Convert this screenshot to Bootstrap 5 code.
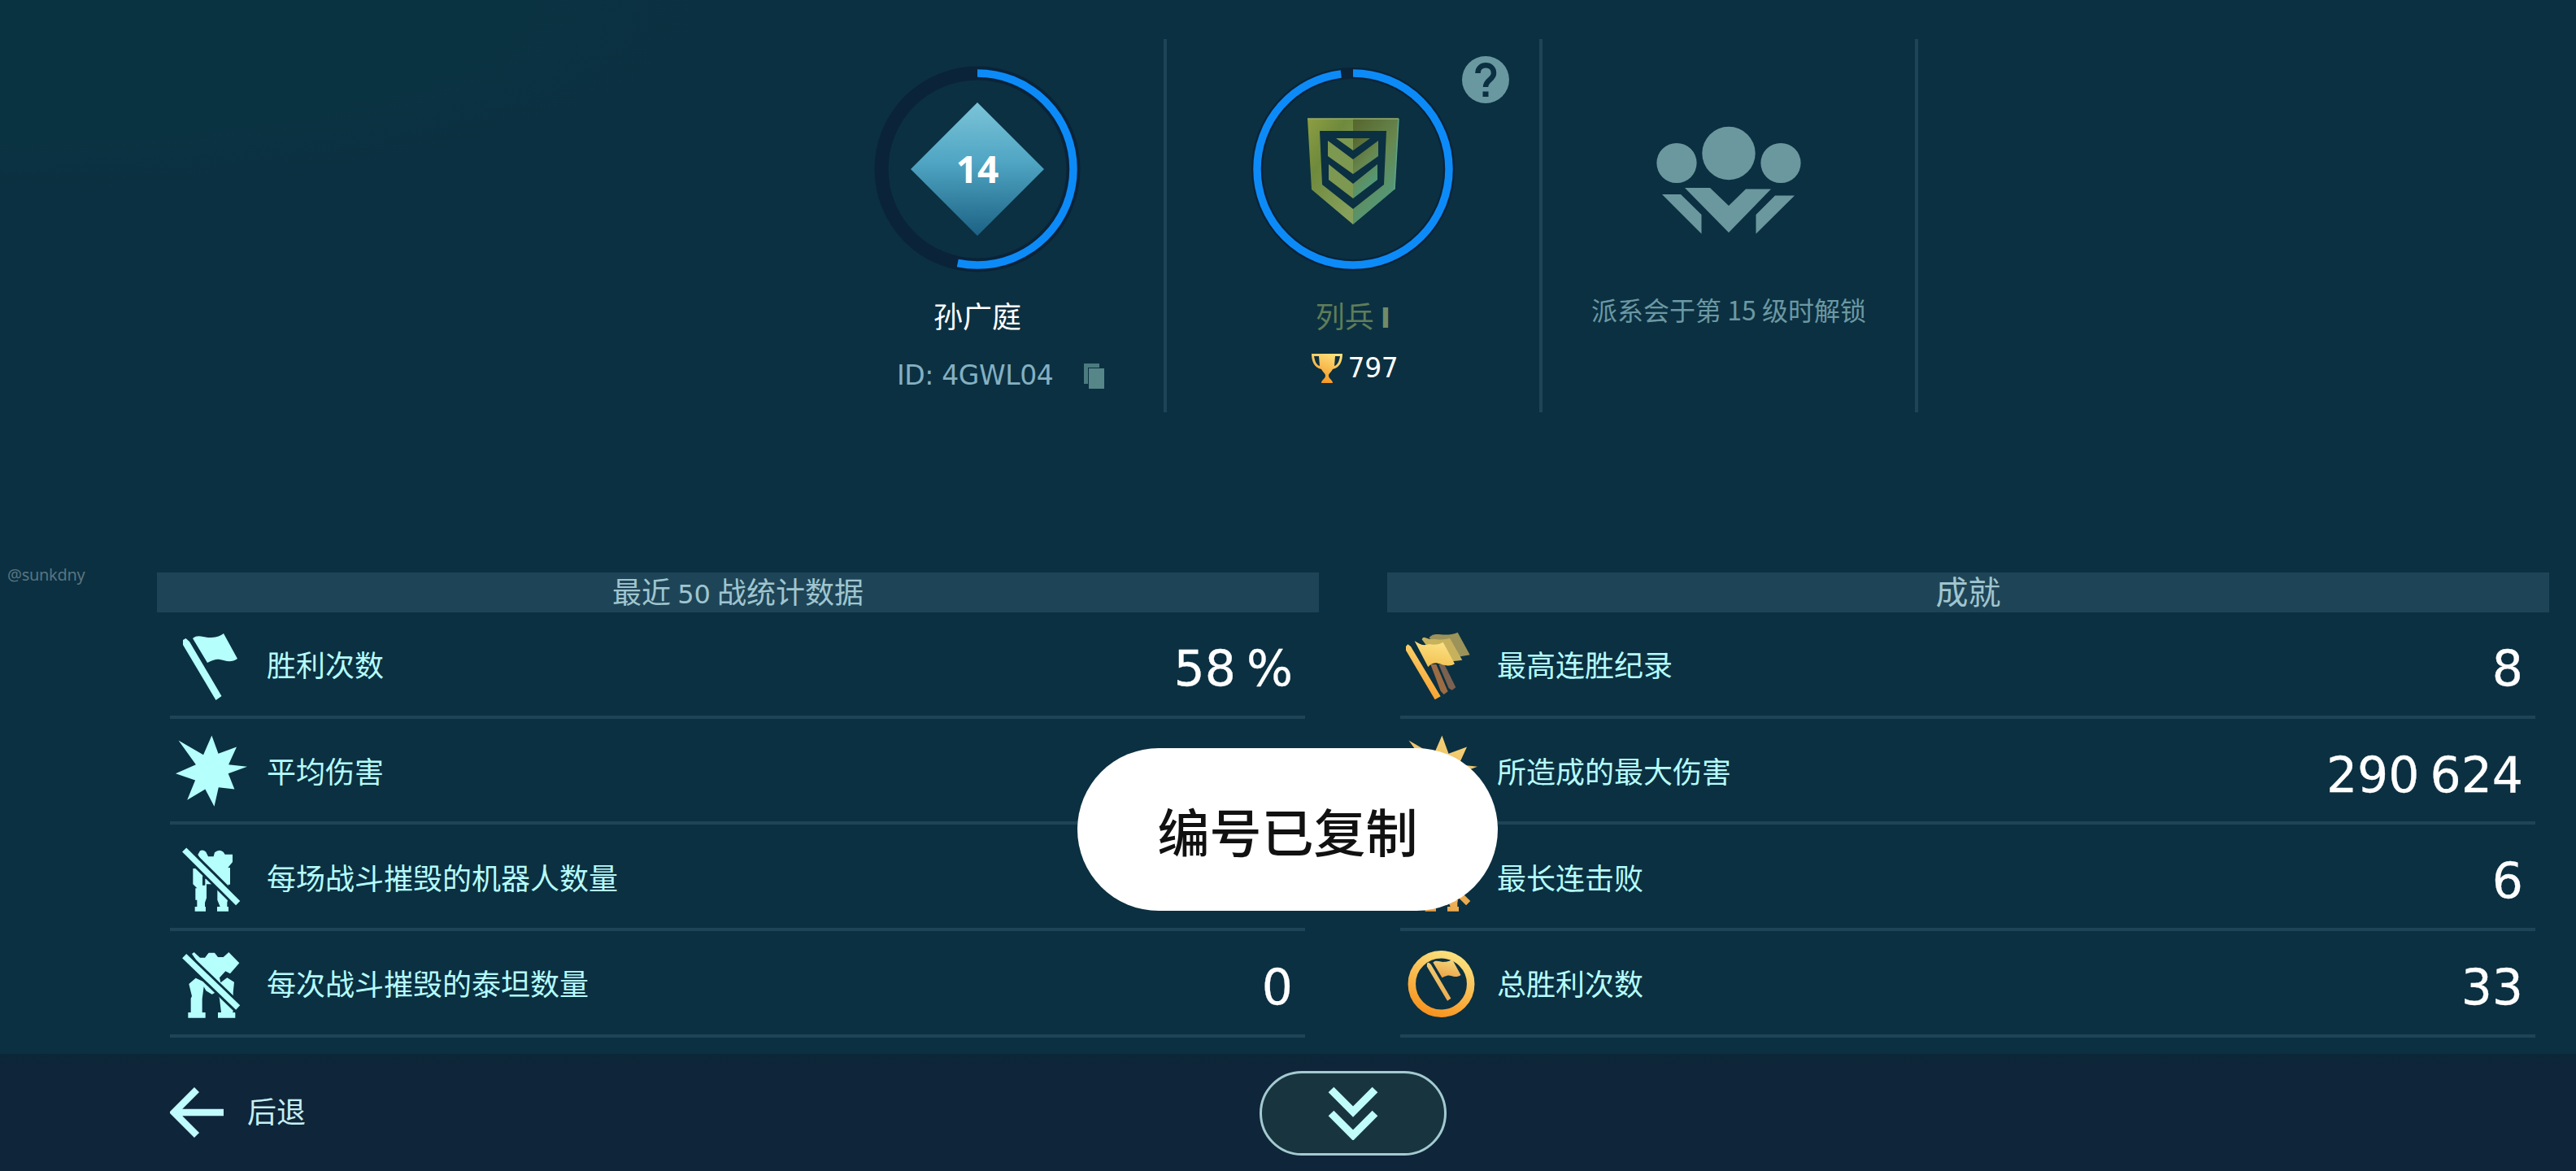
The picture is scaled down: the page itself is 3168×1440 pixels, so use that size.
<!DOCTYPE html>
<html lang="zh-CN">
<head>
  <meta charset="UTF-8" />
  <meta name="viewport" content="width=device-width, initial-scale=1.0" />
  <title>战绩</title>
  <link href="https://cdn.jsdelivr.net/npm/bootstrap@5.3.0/dist/css/bootstrap.min.css" rel="stylesheet" />
  <style>
    body { font-family: "Noto Sans CJK SC", sans-serif; background: #0b3041; color: #b5fbfb; height: 1440px; overflow: hidden; font-size: 36px; line-height: 50px; }
    svg { display: block; flex: none; }
    .digits { font-family: "DejaVu Sans", sans-serif; }

    .profile { height: 704px; padding: 48px 0 0 973px; background: radial-gradient(ellipse 900px 240px at 0 0, #0a3342 70%, #0b3041 100%); }
    .profile-cell { width: 462px; height: 459px; border-right: 4px solid #1e4557; padding-top: 30px; }
    .ring-box { width: 260px; height: 260px; }
    .level-num { font-family: "Open Sans", sans-serif; font-weight: 700; font-size: 46px; fill: #fff; }
    .player-name { margin-top: 24px; color: #fff; }
    .player-id { margin-top: 25px; padding-left: 130px; gap: 38px; color: #84b0c2; }
    .player-id .digits { font-size: 33px; letter-spacing: -0.4px; }
    .rank-name { margin-top: 24px; color: #5f7d59; }
    .rank-name .digits { font-size: 33px; font-weight: 700; color: #718c66; margin-left: 8px; }
    .trophies { margin-top: 11px; gap: 6px; padding-left: 5px; color: #fff; }
    .trophies .digits { font-size: 33px; letter-spacing: -0.3px; }
    .help-btn { right: 36px; top: 20px; }
    .locked { margin-top: 17px; font-size: 32px; color: #6b99a3; }
    .sign { left: 9px; top: 692px; font-family: "Noto Sans", sans-serif; font-size: 20px; line-height: 30px; color: #587580; letter-spacing: -0.3px; }

    .boards { height: 592px; padding-left: 193px; gap: 84px; }
    .board { width: 1429px; }
    .board-head { height: 49px; line-height: 45px; background: #1e4557; color: #a0c5cf; }
    .board-head .digits { font-size: 32px; }
    .head-big { font-size: 40px; }
    .stat-row { height: 130.7px; margin: 0 17px 0 16px; border-bottom: 4px solid #1e4557; padding: 0 15px 0 5px; }
    .stat-row .stat-icon { width: 90px; height: 90px; margin-right: 24px; margin-top: 4px; }
    .stat-label { margin-top: 0; }
    .stat-value { font-size: 60px; line-height: 80px; color: #fff; margin-top: 11px; word-spacing: -6px; -webkit-text-stroke: 0.3px #fff; }
    .icon-ice { fill: #b5fffc; color: #b5fffc; }
    .icon-gold { fill: url(#goldSoft); color: #ebab50; }
    .cut { fill: none; stroke: #0b3041; stroke-width: 40; }
    .bar { fill: none; stroke: currentColor; stroke-width: 22; }

    .bottom-bar { height: 144px; background: linear-gradient(#0b2738, #0f2539 14px); padding-left: 209px; }
    .back-btn { gap: 29px; color: #c5eef2; width: 1340px; }
    .back-btn span { margin-top: -6px; }
    .more-btn { width: 230px; height: 104px; border: 3px solid #a3cad0; border-radius: 52px; background: #18353f; margin-top: 1px; }

    .copied-toast { left: 1325px; top: 920px; width: 517px; height: 200px; border-radius: 100px; background: #fff; color: #111; font-size: 64px; font-weight: 500; line-height: 90px; }
  </style>
</head>
<body>
  <!-- Icon symbols -->
  <svg width="0" height="0" class="position-absolute">
    <defs>
      <linearGradient id="gold" x1="0.7" y1="0" x2="0.3" y2="1">
        <stop offset="0" stop-color="#fbe07c" />
        <stop offset="1" stop-color="#f7941f" />
      </linearGradient>
      <linearGradient id="goldSoft" x1="0.7" y1="0" x2="0.3" y2="1">
        <stop offset="0" stop-color="#f3d77c" />
        <stop offset="1" stop-color="#eba145" />
      </linearGradient>
      <linearGradient id="goldCloth" x1="0.6" y1="0" x2="0.3" y2="1">
        <stop offset="0" stop-color="#fbe285" />
        <stop offset="1" stop-color="#f2c04f" />
      </linearGradient>
      <linearGradient id="gem" x1="0" y1="0" x2="0" y2="1">
        <stop offset="0" stop-color="#7cc4d8" />
        <stop offset="0.45" stop-color="#4fa5c3" />
        <stop offset="1" stop-color="#1c6184" />
      </linearGradient>
      <linearGradient id="rankLeft" x1="0" y1="0" x2="0.7" y2="1">
        <stop offset="0" stop-color="#8d9e42" />
        <stop offset="0.4" stop-color="#6f8a3c" />
        <stop offset="1" stop-color="#86a05c" />
      </linearGradient>
      <linearGradient id="rankRight" x1="0" y1="0" x2="0.5" y2="1">
        <stop offset="0" stop-color="#56652c" />
        <stop offset="0.5" stop-color="#67874f" />
        <stop offset="1" stop-color="#4f9c80" />
      </linearGradient>
      <symbol id="flag" viewBox="0 0 90 90">
        <path d="M11 14 L14.500 12 L19 16 L58.500 83 L51.500 88 L11 20Z" />
        <path d="M23 12 C30 6 37 12 46 11 C53 10.500 57 9 61 6 L78 37 C70 43 62 39 56 38 C50 37 46 40 41 42Z" />
      </symbol>
      <symbol id="burst" viewBox="0 0 90 90">
        <path d="M46.400 .5 L54.500 22.800 77 14.500 67.100 36.200 90 38.800 66.700 47.200 74.400 66.500 54.800 64.200 49.500 87.800 38.400 66.500 16.200 79.800 26.100 55.500 2 47.200 26.900 36.200 5.500 6.500 36.100 24.200Z" />
      </symbol>
      <symbol id="robot" viewBox="0 0 270 270">
        <path fill-rule="evenodd" d="M88 48 L96 34 Q107 28 118 38 L126 55 H146 L150 40 Q166 26 182 38 L188 47 H216 V75 L199 96 H207 V158 H200 V208 L196 225 V240 H201 V257 H159 V240 H170 L160 215 V168 L150 157 H120 V208 L114 225 V240 H117 V257 H77 V240 H85 V215 H79 V172 H85 L70 157 V99 H93 L108 80Z M105 127 V161 H115 V137 H125 V127Z" />
        <path class="cut" d="M40 32 L250 240" />
        <path class="bar" d="M38 30 L236 227" />
      </symbol>
      <symbol id="titan" viewBox="0 0 270 270">
        <path d="M66 24 L74 18 L96 38 H114 L128 20 H150 L162 36 H182 L202 18 L241 58 L207 97 L190 88 L168 112 L172 130 L196 112 L222 128 L218 168 L220 232 L216 240 H226 V260 H162 V240 H174 L168 190 L160 163 L140 173 L118 160 L110 145 L104 190 V240 H116 V260 H52 V240 H62 V188 L66 180 L55 135 L80 113 L106 125 L125 110Z" />
        <path class="cut" d="M40 34 L250 236" />
        <path class="bar" d="M38 32 L236 222" />
      </symbol>
      <symbol id="streak" viewBox="0 0 270 270">
        <path fill="#7b6150" d="M127 132 H148 L190 217 L176 227 L164 220Z" />
        <path fill="#9c6c43" d="M97 132 H118 L161 232 L146 243 L134 230Z" />
        <path fill="#9b9359" d="M92 34 C112 6 146 36 197 14 L242 97 C214 102 180 110 160 105Z" />
        <path fill="#c7b15d" d="M65 40 C72 20 86 45 108 38 C134 42 150 40 168 35 L214 116 C180 122 150 118 128 125Z" />
        <path fill="url(#goldCloth)" d="M38 46 C56 56 66 66 92 57 C112 62 130 58 143 50 L186 130 C168 143 146 134 124 128 C108 124 96 132 88 142Z" />
        <path fill="url(#gold)" d="M6 66 L13 58 L24 66 L134 250 L113 262 L6 80Z" />
      </symbol>
      <symbol id="medal" viewBox="0 0 90 90">
        <circle cx="45.500" cy="45" r="36.200" fill="none" stroke="url(#gold)" stroke-width="9.500" />
        <svg x="21" y="11" width="56" height="56"><use href="#flag" /></svg>
      </symbol>
    </defs>
  </svg>

  <!-- Player profile -->
  <div class="profile d-flex">
    <div class="profile-cell">
      <svg class="ring-box mx-auto" viewBox="-130 -130 260 260">
        <circle r="118" fill="none" stroke="#0a2338" stroke-width="17" />
        <circle r="118" fill="none" stroke="#0c8bf8" stroke-width="9.500" pathLength="100" stroke-dasharray="53.3 100" transform="rotate(-90)" />
        <path d="M0 -82 L82 0 L0 82 L-82 0Z" fill="url(#gem)" />
        <text class="level-num" text-anchor="middle" y="17">14</text>
      </svg>
      <div class="player-name text-center">孙广庭</div>
      <div class="player-id d-flex align-items-center">
        <span class="digits">ID: 4GWL04</span>
        <svg width="25" height="31" viewBox="0 0 25 31">
          <path d="M0 0 H19 V5 H5 V25 H0Z" fill="#4b7b7f" />
          <path d="M6 6 H25 V31 H6Z" fill="#578688" />
        </svg>
      </div>
    </div>

    <div class="profile-cell position-relative">
      <svg class="ring-box mx-auto" viewBox="-130 -130 260 260">
        <circle r="118" fill="none" stroke="#0a2338" stroke-width="14" />
        <circle r="118" fill="none" stroke="#0c8bf8" stroke-width="9.500" pathLength="100" stroke-dasharray="98 100" transform="rotate(-90)" />
        <path d="M-56 -62 H0 V-47 H-41 L-38 19 L0 49 V68 L-51 25Z" fill="url(#rankLeft)" />
        <path d="M56 -62 H0 V-47 H41 L38 19 L0 49 V68 L51 25Z" fill="url(#rankRight)" />
        <path d="M-56 -62 H56" stroke="#98ad68" stroke-width="1.500" />
        <path d="M56 -62 L51 25" stroke="#5fa58a" stroke-width="1.500" />
        <path d="M-21 -38 H0 V-23Z M-31 -35 L0 -12 V6 L-31 -16Z M-30 -6 L0 18 V36 L-30 13Z" fill="#7d9850" />
        <path d="M21 -38 H0 V-23Z M31 -35 L0 -12 V6 L31 -16Z M30 -6 L0 18 V36 L30 13Z" fill="url(#rankRight)" />
      </svg>
      <button class="help-btn btn p-0 border-0 position-absolute">
        <svg width="60" height="60" viewBox="-30 -30 60 60">
          <circle r="29" fill="#6998a0" />
          <path d="M-9.500 -8 C-9.500 -21 10 -21 10 -8 C10 0 0 0 0 9" fill="none" stroke="#0b3041" stroke-width="6.500" />
          <path d="M-3.500 14.500 H3.500 V21 H-3.500Z" fill="#0b3041" />
        </svg>
      </button>
      <div class="rank-name text-center">列兵<span class="digits">I</span></div>
      <div class="trophies d-flex align-items-center justify-content-center">
        <svg width="38" height="37" viewBox="0 0 38 37" fill="url(#gold)">
          <path fill-rule="evenodd" d="M0 0 H38 C38 9 35 17 26 19 C24 23 21 24 21 27 C21 31 26 32 26 36 H12 C12 32 17 31 17 27 C17 24 14 23 12 19 C3 17 0 9 0 0Z M3 3 C4 9 6 14 10 15 L9 3Z M29 3 L28 15 C32 14 34 9 35 3Z" />
        </svg>
        <span class="digits">797</span>
      </div>
    </div>

    <div class="profile-cell">
      <svg class="ring-box mx-auto" viewBox="-130 -130 260 260" fill="#6b989e">
        <circle cx="0" cy="-19.500" r="32.700" />
        <circle cx="-64" cy="-7.500" r="24.600" />
        <circle cx="64" cy="-7.500" r="24.600" />
        <path d="M-54 23 H-23 L0 45 L21 24.500 H52 L0 78Z" />
        <path d="M-82 31 H-59 L-33.500 56 V79.500Z M81 32.500 H57 L33.500 56 V79.500Z" />
      </svg>
      <div class="locked text-center">派系会于第 15 级时解锁</div>
    </div>
  </div>
  <div class="sign position-absolute">@sunkdny</div>

  <!-- Statistics -->
  <div class="boards d-flex">
    <div class="board">
      <div class="board-head text-center">最近 <span class="digits">50</span> 战统计数据</div>
      <div id="recent-list"></div>
    </div>
    <div class="board">
      <div class="board-head head-big text-center">成就</div>
      <div id="achievement-list"></div>
    </div>
  </div>

  <!-- Bottom bar -->
  <div class="bottom-bar d-flex align-items-center">
    <div class="back-btn d-flex align-items-center">
      <svg width="66" height="62" viewBox="0 0 66 62">
        <path d="M33 3 L5 31 L33 59 M6 31 H66" fill="none" stroke="#c0fbfd" stroke-width="8.500" />
      </svg>
      <span>后退</span>
    </div>
    <button class="more-btn btn p-0 d-flex align-items-center justify-content-center">
      <svg width="62" height="66" viewBox="0 0 62 66">
        <path d="M4 4 L31 31 L58 4 M4 33 L31 60 L58 33" fill="none" stroke="#bffcfa" stroke-width="9.500" />
      </svg>
    </button>
  </div>

  <!-- Copy notice -->
  <div class="copied-toast position-absolute d-flex align-items-center justify-content-center">编号已复制</div>

  <script src="https://cdn.jsdelivr.net/npm/bootstrap@5.3.0/dist/js/bootstrap.bundle.min.js"></script>
  <script>
    const recent = [
      { icon: "flag", label: "胜利次数", value: "58 %" },
      { icon: "burst", label: "平均伤害", value: "" },
      { icon: "robot", label: "每场战斗摧毁的机器人数量", value: "" },
      { icon: "titan", label: "每次战斗摧毁的泰坦数量", value: "0" }
    ];
    const achievements = [
      { icon: "streak", label: "最高连胜纪录", value: "8" },
      { icon: "burst", label: "所造成的最大伤害", value: "290 624" },
      { icon: "robot", label: "最长连击败", value: "6" },
      { icon: "medal", label: "总胜利次数", value: "33" }
    ];

    function showStats(id, rows, color) {
      document.getElementById(id).innerHTML = rows.map(r => `
        <div class="stat-row d-flex align-items-center">
          <svg class="stat-icon ${color}"><use href="#${r.icon}" /></svg>
          <span class="stat-label">${r.label}</span>
          <span class="stat-value digits ms-auto">${r.value}</span>
        </div>
      `).join("");
    }

    showStats("recent-list", recent, "icon-ice");
    showStats("achievement-list", achievements, "icon-gold");
  </script>
</body>
</html>
